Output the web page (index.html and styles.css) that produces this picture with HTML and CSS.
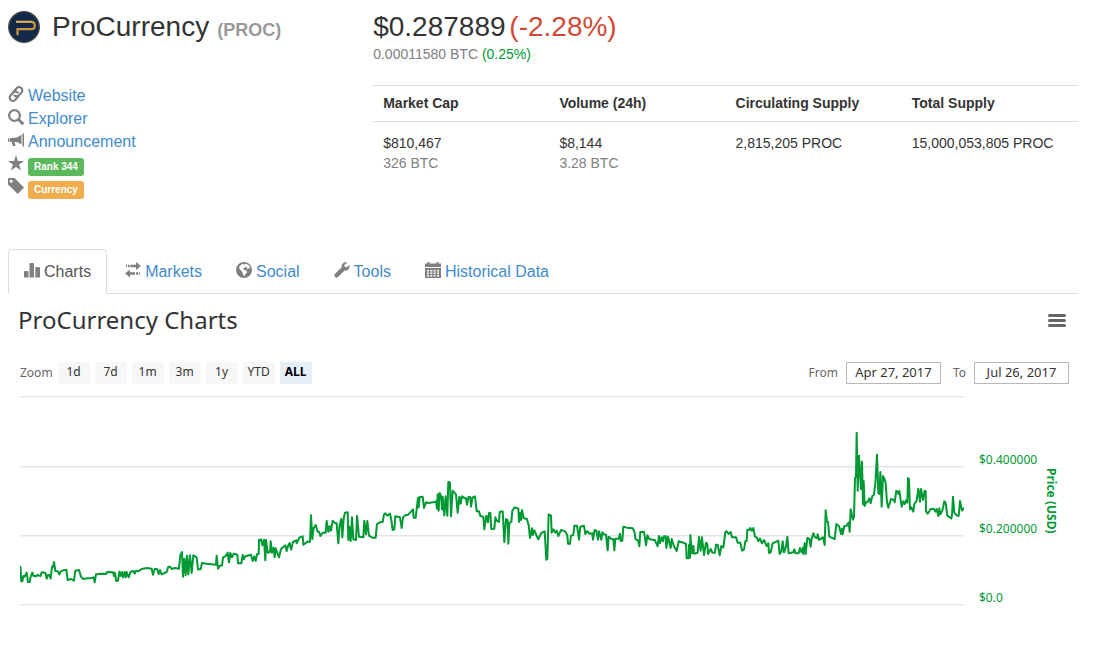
FILE: index.html
```html
<!DOCTYPE html>
<html lang="en">
<head>
<meta charset="utf-8">
<title>ProCurrency (PROC)</title>
<link rel="stylesheet" href="styles.css">
</head>
<body>
<main class="page">
  <header class="summary">
    <section class="identity">
      <h1 class="coin">
        <svg class="coin-logo" viewBox="0 0 32 32" aria-hidden="true">
          <circle cx="16" cy="16" r="15.3" fill="#12294a" stroke="#4a4a43" stroke-width="1.3"/>
          <path d="M8 10.800h15.500q3.300 0 3.300 3.700t-3.300 3.700H9.500v6" fill="none" stroke="#c9963f" stroke-width="2.200"/>
          <path d="M8 10.400h15.500" stroke="#f0cc80" stroke-width=".8"/>
        </svg>
        <span>ProCurrency</span>
        <small class="ticker">(PROC)</small>
      </h1>
      <ul class="links">
        <li><svg class="icon" viewBox="0 0 16 16"><g transform="rotate(-50 8 8)" fill="none" stroke="currentColor" stroke-width="2.200"><path d="M8.500 11.200H3.200a3.200 3.200 0 0 1 0-6.400H7a3.200 3.200 0 0 1 2.900 4.400"/><path d="M7.500 4.800h5.300a3.200 3.200 0 0 1 0 6.400H9a3.200 3.200 0 0 1-2.900-4.400"/></g></svg><a href="#website">Website</a></li>
        <li><svg class="icon" viewBox="0 0 16 16"><circle cx="6.500" cy="6.500" r="5.400" fill="none" stroke="currentColor" stroke-width="2.200"/><path d="M10.300 10.300l5 5" stroke="currentColor" stroke-width="2.900"/></svg><a href="#explorer">Explorer</a></li>
        <li><svg class="icon" viewBox="0 0 16 16"><path d="M14.500 1.500H16v13h-1.500zM13.500 2.500v10Q10 10 6.500 9.800L7.500 14H5L3.500 9.800H1.500V6H4Q10 6 13.500 2.500zM0 6.500h1v3H0z" fill="currentColor"/></svg><a href="#announcement">Announcement</a></li>
        <li><svg class="icon" viewBox="0 0 16 16"><path d="M8 0l1.900 5.900H16l-4.900 3.600 1.900 6L8 11.900 3 15.500l1.900-6L0 5.900h6.100z" fill="currentColor"/></svg><span class="badge badge-rank">Rank 344</span></li>
        <li><svg class="icon" viewBox="0 0 16 16"><path fill-rule="evenodd" d="M0 1q0-1 1-1h5.500L16 9.500 9.800 16 0 6.500zM3.200 1.700a1.500 1.500 0 1 0 0 3 1.500 1.500 0 0 0 0-3z" fill="currentColor"/></svg><span class="badge badge-type">Currency</span></li>
      </ul>
    </section>
    <section class="figures">
      <div class="price">$0.287889 <span class="down">(-2.28%)</span></div>
      <div class="price-btc">0.00011580 BTC <span class="up">(0.25%)</span></div>
      <table class="stats">
        <thead>
          <tr><th scope="col">Market Cap</th><th scope="col">Volume (24h)</th><th scope="col">Circulating Supply</th><th scope="col">Total Supply</th></tr>
        </thead>
        <tbody>
          <tr>
            <td>$810,467<br><span class="muted">326 BTC</span></td>
            <td>$8,144<br><span class="muted">3.28 BTC</span></td>
            <td>2,815,205 PROC</td>
            <td>15,000,053,805 PROC</td>
          </tr>
        </tbody>
      </table>
    </section>
  </header>

  <nav class="tabs">
    <a class="tab active" href="#charts"><svg class="icon" viewBox="0 0 16 16"><path d="M0 10q0-1 1-1h2.500q1 0 1 1v5.500H0zM5.500 2q0-1 1-1H9q1 0 1 1v13.500H5.500zM11.300 6q0-1 1-1H15q1 0 1 1v9.500h-4.700z" fill="currentColor"/></svg>Charts</a>
    <a class="tab" href="#markets"><svg class="icon" viewBox="0 0 16 16"><path d="M11 0l5 4-5 4V5.300H5.500V2.700H11zM1 2.700h1v2.600H1zM3 2.700h1.700v2.600H3zM5 7.500L0 11.500l5 4v-2.700h5v-2.600H5zM11 10.200h2v2.600h-2zM14 10.200h1v2.600h-1z" fill="currentColor"/></svg>Markets</a>
    <a class="tab" href="#social"><svg class="icon" viewBox="0 0 16 16"><path fill-rule="evenodd" d="M8 0a8 8 0 1 0 0 16A8 8 0 0 0 8 0zM6 2l3 .5 1-1 3 2 1.500 3-1.500-.5-1.500 1-1-2-2 .5L7 7l1.500 1 2 .5.500 2-2 2-.5 2L7 12.500 6.500 10 4 7.500 3 5z" fill="currentColor"/></svg>Social</a>
    <a class="tab" href="#tools"><svg class="icon" viewBox="0 0 16 16"><path d="M15.600 3l-3 2.300-1.900-.6-.3-1.800L13.300.5Q10.800-.4 9 1.200T7.700 5.200L.600 12.200q-.8 1 .2 2.200l.8.800q1.100.9 2.100 0l7-6.600q2.300.4 3.900-1.300T15.600 3z" fill="currentColor"/></svg>Tools</a>
    <a class="tab" href="#history"><svg class="icon" viewBox="0 0 16 16"><path fill-rule="evenodd" d="M0 1.500h2.500V0h2v1.500h7V0h2v1.500H16V5H0zM0 6h16v10H0zM2 8v1.500h2V8zM5.300 8v1.500h2V8zM8.600 8v1.500h2V8zM12 8v1.500h2V8zM2 10.500V12h2v-1.500zM5.300 10.500V12h2v-1.500zM8.600 10.500V12h2v-1.500zM12 10.500V12h2v-1.500zM2 13v1.500h2V13zM5.300 13v1.500h2V13zM8.600 13v1.500h2V13zM12 13v1.500h2V13z" fill="currentColor"/></svg>Historical Data</a>
  </nav>

  <section class="chart">
    <div class="chart-head">
      <h2 class="chart-title">ProCurrency Charts</h2>
      <button class="menu" type="button" aria-label="Chart menu"><span></span><span></span><span></span></button>
    </div>
    <form class="range">
      <span class="range-label">Zoom</span>
      <div class="zooms">
        <button class="zoom" type="button">1d</button>
        <button class="zoom" type="button">7d</button>
        <button class="zoom" type="button">1m</button>
        <button class="zoom" type="button">3m</button>
        <button class="zoom" type="button">1y</button>
        <button class="zoom" type="button">YTD</button>
        <button class="zoom selected" type="button">ALL</button>
      </div>
      <label class="range-label from" for="from">From</label>
      <input class="date" id="from" type="text" value="Apr 27, 2017">
      <label class="range-label to" for="to">To</label>
      <input class="date" id="to" type="text" value="Jul 26, 2017">
    </form>
    <div class="plot-row">
      <svg class="plot" viewBox="60 1188 2832 630" preserveAspectRatio="none" role="img" aria-label="Price history in USD">
        <path class="grid" d="M60 1190.500H2892M60 1400.500H2892M60 1607.500H2892M60 1814.500H2892"/>
        <g class="series">
          <polyline transform="translate(0 1620)" points="61,80 64,124 67,124 70,108 74,110 80,98 84,126 89,126 92,110 97,98 100,107 108,109 112,105 122,108 125,97 135,98 137,101 140,116 144,105 148,105 152,116 156,80 159,80 162,66 166,93 173,94 178,103 182,94 190,91 199,89 203,120 213,117 222,122 226,92 237,90 243,110 250,117 262,115 275,114 281,112 284,127 288,103 305,101 318,102 321,96 339,97 342,108 345,98 348,122 354,122 358,95 362,108 366,96 369,112 374,96 377,112 380,96 386,112 392,95 400,93 404,101 408,92 415,94 425,87 440,84 455,86 459,104 464,87 471,87 476,102 480,90 485,103 500,96 505,80 510,80 515,87 525,84 537,86 541,45 546,36 549,110 553,56 557,106 561,47 565,103 570,46 575,99 580,46 590,52 594,88"/>
          <polyline transform="translate(540 1440)" points="54,268 62,268 66,249 80,251 108,254 110,227 114,266 120,257 126,256 129,233 137,228 143,218 147,247 151,219 156,232 161,221 172,224 174,250 184,250 188,225 191,238 196,229 213,224 218,243 223,229 227,243 231,223 236,222 237,180 243,178 247,196 252,179 256,241 258,180 263,218 270,216 272,184 276,218 281,203 284,232 287,205 297,232 303,207 316,196 320,213 324,198 329,189 333,209 339,186 349,181 350,190 358,173 368,169 370,194 384,184 390,186 393,106 397,177 401,144 407,135 413,155 417,155 421,168 429,158 437,158 440,123 445,155 449,139 453,152 458,122 466,130 470,130 475,190 479,135 484,117 487,172 491,115 495,98 503,97 505,180 508,140 512,183 516,112 520,178 528,180 531,107 537,170 550,172 553,122 558,163 562,123 567,167 577,173 587,173 591,132 600,127"/>
          <polyline transform="translate(1110 1410)" points="30,157 38,156 42,133 46,130 52,137 60,131 64,150 68,180 73,178 76,139 90,142 95,174 99,142 105,136 115,134 129,118 131,143 137,143 144,83 146,112 149,81 158,80 162,114 168,97 175,99 190,97 198,94 201,116 203,73 206,122 209,69 214,80 216,118 218,80 223,136 227,79 232,137 235,36 240,38 243,139 248,62 258,73 263,128 268,80 272,101 276,79 285,85 288,85 291,104 296,80 301,82 303,110 308,82 315,79 320,124 327,124 331,138 340,140 343,178 349,137 354,157 357,129 361,128 364,177 373,176 376,142 380,152 387,156 389,126 398,124 403,216 408,147 413,150 415,221 418,160 424,155 427,122 434,112 445,116 447,156 451,128 453,150 456,120 461,145 470,146 476,165 480,204 486,175 488,195 493,181 499,195 505,208 514,189 524,184 529,269 532,267 536,133 543,137 545,188 550,178 556,188 560,182 565,198 573,180 580,182 586,185 592,196 594,221 600,221"/>
          <polyline transform="translate(1680 1530)" points="30,101 33,77 40,75 43,47 51,47 57,89 61,50 72,47 76,72 82,63 88,71 97,70 99,89 104,60 109,62 114,89 117,64 124,89 127,67 131,73 138,74 143,121 146,80 155,87 160,88 163,121 166,86 176,86 180,71 182,93 187,92 190,50 200,53 218,55 223,64 227,88 234,91 238,109 241,66 252,65 258,106 262,76 268,87 285,91 293,109 297,78 300,99 305,82 309,94 312,79 317,79 319,114 324,80 332,114 335,87 342,109 350,123 356,94 370,98 378,102 380,145 386,145 387,105 390,143 391,75 396,130 400,108 402,131 413,128 417,81 422,122 426,82 432,135 438,98 442,102 444,132 452,117 457,128 465,128 468,104 473,104 479,136 484,108 490,112 496,67 500,64 506,72 512,66 516,82 528,82 533,98 541,98 546,122 552,119 556,94 560,93 562,59 568,60 571,54 576,62 580,54 585,80 590,82 595,93 600,86"/>
          <polyline transform="translate(2220 1260)" points="60,356 66,370 72,360 80,378 85,370 87,399 92,397 98,370 115,362 119,402 124,395 128,364 132,397 138,380 142,350 146,400 160,397 163,388 167,400 176,400 180,384 185,397 189,383 190,402 194,370 197,402 202,354 208,357 212,380 215,357 220,340 225,352 231,354 233,343 237,360 249,352 254,375 257,271 261,305 264,306 268,350 284,357 289,312 297,318 303,342 306,326 308,343 313,318 320,317 326,308 329,335 332,268 337,290 339,299 342,290 345,174 348,170 350,38 353,212 357,107 363,207 366,125 369,253 371,183 374,258 378,247 382,247 388,235 392,250 397,228 402,224 406,190 411,104 415,220 418,222 421,156 425,260 429,168 434,178 437,190 441,247 445,263 453,237 462,240 464,247 469,212 476,222 478,213 485,260 490,244 494,252 499,240 502,248 504,174 507,178 510,268 514,262 520,275 523,252 530,242 535,206 540,245 543,207 549,240 554,212 557,214 558,274 563,281 572,267 582,267 586,275 590,267 595,288 598,265 601,283 607,272 613,244 617,248 622,287 634,295 636,285 639,230 643,278 650,286 656,288 660,243 666,272 672,265"/>
        </g>
      </svg>
      <div class="axis">
        <span>$0.400000</span>
        <span>$0.200000</span>
        <span>$0.0</span>
      </div>
      <div class="axis-title">Price (USD)</div>
    </div>
  </section>
</main>
</body>
</html>
```
FILE: styles.css
```css
* { box-sizing: border-box; }
body {
  margin: 0;
  background: #fff;
  color: #333;
  font: 14px/20px "Liberation Sans", Arial, sans-serif;
}
.page { padding: 8px 15px 0 8px; }
a { color: #428bca; text-decoration: none; }
.icon { width: 16px; height: 16px; flex: none; color: #808080; overflow: visible; }

.summary { display: flex; margin: 0 -15px; min-height: 241px; }
.identity { width: 33.2%; padding: 0 15px; }
.figures { width: 66.8%; padding: 0 15px; }

.coin {
  display: flex;
  align-items: baseline;
  margin: 0;
  font-size: 28px;
  line-height: 38px;
  font-weight: 400;
}
.coin-logo { width: 32px; height: 32px; margin: 3px 12px 0 0; align-self: flex-start; }
.ticker { margin-left: 8px; font-size: 18px; font-weight: 700; color: #999; }

.links { list-style: none; margin: 35px 0 0; padding: 0; font-size: 16px; line-height: 23px; }
.links li { display: flex; height: 23px; gap: 4px; }
.links .icon { margin-top: 2px; }
.badge {
  align-self: flex-end;
  height: 18px;
  padding: 0 6px;
  border-radius: 3px;
  color: #fff;
  font-size: 10px;
  line-height: 18px;
  font-weight: 700;
}
.badge-rank { background: #5cb85c; }
.badge-type { background: #f0ad4e; }

.price { font-size: 28px; line-height: 38px; }
.price .down { color: #d14836; margin-left: -4px; }
.price-btc { line-height: 16px; color: #808080; }
.price-btc .up { color: #009933; }
.muted { color: #808080; }
.stats { width: 100%; margin-top: 23px; border-collapse: collapse; table-layout: fixed; }
.stats th, .stats td { padding: 8px 10px; text-align: left; vertical-align: top; }
.stats th { border: solid #ddd; border-width: 1px 0; line-height: 19px; }
.stats td { padding-top: 11px; }

.tabs { display: flex; gap: 2px; border-bottom: 1px solid #ddd; font-size: 16px; line-height: 23px; }
.tab {
  display: flex;
  gap: 4px;
  padding: 10px 15px;
  margin-bottom: -1px;
  border: 1px solid transparent;
  border-radius: 4px 4px 0 0;
}
.tab .icon { margin-top: 2px; }
.tab.active { color: #555; background: #fff; border-color: #ddd #ddd #fff; }

.chart { font-family: "Noto Sans", "Lucida Grande", sans-serif; font-size: 12px; color: #666; }
.chart-head { display: flex; justify-content: space-between; align-items: center; padding: 9px 12px 0 10px; }
.chart-title { margin: 0; font-size: 24px; line-height: 34px; font-weight: 400; color: #333; }
.menu { display: grid; gap: 2px; padding: 0; border: 0; background: none; }
.menu span { width: 18px; height: 3px; border-radius: 2px; background: #666; }

.range { display: flex; align-items: center; margin: 25px 9px 0 12px; }
.range-label { line-height: 22px; }
.zooms { display: flex; gap: 5px; margin-left: 5px; }
.zoom {
  width: 32px;
  height: 22px;
  padding: 0 0 2px;
  border: 0;
  background: #f7f7f7;
  color: #333;
  font: 12px/20px "Noto Sans", sans-serif;
}
.zoom.selected { background: #e6eff8; color: #000; font-weight: 700; }
.from { margin-left: auto; }
.to { margin-left: 12px; }
.date {
  width: 95px;
  height: 22px;
  margin-left: 8px;
  padding: 0 0 2px;
  border: 1px solid #b8b8b8;
  background: #fff;
  color: #333;
  font: 13px/18px "Noto Sans", sans-serif;
  text-align: center;
}

.plot-row { display: flex; align-items: flex-start; margin: 12px 20px 0 12px; color: #009933; }
.plot { flex: 1; min-width: 0; height: 210px; display: block; }
.grid { fill: none; stroke: #d8d8d8; stroke-width: 1px; vector-effect: non-scaling-stroke; }
.series polyline {
  fill: none;
  stroke: #009933;
  stroke-width: 2px;
  stroke-linejoin: round;
  stroke-linecap: round;
  vector-effect: non-scaling-stroke;
}
.axis { display: grid; width: 65px; margin: 29px 0 0 15px; line-height: 69px; }
.axis-title { align-self: flex-start; margin-top: 72px; font-weight: 700; line-height: 14px; writing-mode: vertical-rl; }
```
